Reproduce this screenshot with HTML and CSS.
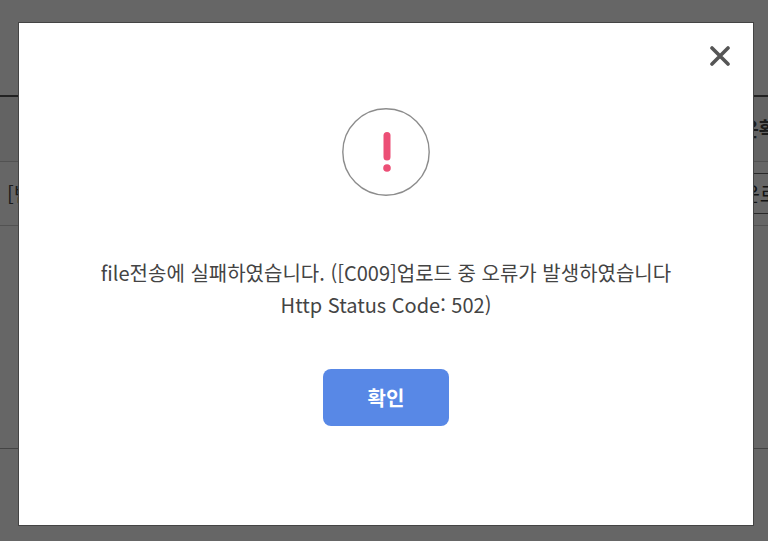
FILE: index.html
```
<!DOCTYPE html>
<html lang="ko">
<head>
  <meta charset="UTF-8">
  <meta name="viewport" content="width=device-width, initial-scale=1.0">
  <title>알림</title>
  <link rel="stylesheet" href="styles.css">
</head>
<body>
  <!-- Page behind the popup -->
  <main class="page">
    <table class="file-table">
      <thead>
        <tr>
          <th></th>
          <th class="col-action">다운확인</th>
        </tr>
      </thead>
      <tbody>
        <tr>
          <td>[빈</td>
          <td class="col-action"><button type="button" class="download">다운로드</button></td>
        </tr>
      </tbody>
    </table>
  </main>

  <!-- Error popup -->
  <div class="overlay">
    <div class="modal" role="alertdialog" aria-modal="true" aria-describedby="message">
      <button type="button" class="close" aria-label="닫기">
        <svg width="20" height="20" viewBox="0 0 20 20">
          <path d="M2 2L18 18M18 2L2 18" stroke="#555" stroke-width="3.6" stroke-linecap="round"/>
        </svg>
      </button>
      <svg class="icon" width="88" height="88" viewBox="0 0 88 88">
        <circle cx="44" cy="44" r="43.2" fill="none" stroke="#8c8c8c" stroke-width="1.4"/>
        <path d="M45 27.5V49" stroke="#ec4f76" stroke-width="7" stroke-linecap="round"/>
        <circle cx="45" cy="60" r="3.8" fill="#ec4f76"/>
      </svg>
      <p class="message" id="message">file전송에 실패하였습니다. ([C009]업로드 중 오류가 발생하였습니다<br>Http Status Code: 502)</p>
      <button type="button" class="confirm">확인</button>
    </div>
  </div>
</body>
</html>
```
FILE: styles.css
```
* {
  box-sizing: border-box;
}
body {
  margin: 0;
  font-family: "Noto Sans CJK KR", sans-serif;
  font-size: 20px;
  color: #444;
}
button {
  font-family: inherit;
  cursor: pointer;
}
.page {
  height: 449px;
  padding-top: 95px;
  overflow: hidden;
  border-bottom: 1px solid #aaa;
}
.file-table {
  width: 100%;
  table-layout: fixed;
  border-collapse: collapse;
  border-top: 2px solid #555;
}
th, td {
  height: 64px;
  padding: 0 0 0 7px;
  border-bottom: 1px solid #ccc;
  text-align: left;
  white-space: nowrap;
}
th {
  height: 65px;
  background-color: #f7f7f7;
}
.col-action {
  width: 50px;
  padding-left: 4px;
}
.download {
  height: 41px;
  padding: 0;
  border: 1px solid #666;
  background-color: #fff;
  font-size: 20px;
  color: #333;
}
.overlay {
  position: fixed;
  inset: 0;
  padding: 22px 14px 15px 18px;
  background-color: rgba(0, 0, 0, 0.6);
}
.modal {
  position: relative;
  display: flex;
  flex-direction: column;
  align-items: center;
  height: 100%;
  padding-top: 85px;
  border: 1px solid #444;
  background-color: #fff;
}
.close {
  position: absolute;
  top: 23px;
  right: 23px;
  padding: 0;
  border: none;
  background: none;
}
.close svg {
  display: block;
}
.message {
  margin: 61px 0 48px;
  line-height: 32px;
  text-align: center;
}
.confirm {
  width: 126px;
  height: 57px;
  border: none;
  border-radius: 8px;
  background-color: #5888e6;
  font-size: 20px;
  font-weight: bold;
  color: #fff;
}
```
